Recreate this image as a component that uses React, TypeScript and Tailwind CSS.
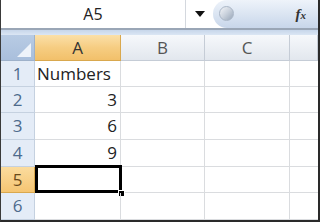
import React from "react";

const cols = ["A", "B", "C", ""];
const rows = [
  { n: 1, a: "Numbers", left: true },
  { n: 2, a: "3" },
  { n: 3, a: "6" },
  { n: 4, a: "9" },
  { n: 5, a: "" },
  { n: 6, a: "" },
];

export default function App() {
  return (
    <div
      className="w-[320px] h-[222px] overflow-hidden bg-white border-l border-r-2 border-b-2 border-l-[#3a3a3a] border-r-[#2a2a2a] border-b-[#2a2a2a] flex flex-col"
      style={{ fontFamily: '"Open Sans", "Liberation Sans", sans-serif' }}
    >
      {/* name box + formula bar */}
      <div className="h-[28px] flex items-stretch bg-white">
        <div className="w-[185px] flex items-center justify-center text-[16px] text-[#222] border-r border-[#d4d8de]">
          A5
        </div>
        <div className="w-[27px] flex items-center justify-center">
          <svg width="10" height="7" viewBox="0 0 10 7">
            <path d="M0 0 L10 0 L5 6 Z" fill="#111" />
          </svg>
        </div>
        <div className="flex-1 flex items-center justify-end pr-3 rounded-l-[14px] bg-gradient-to-b from-[#eef3fa] via-[#dbe5f2] to-[#c8d6ea] relative">
          <div className="absolute left-[6px] top-[6px] w-[15px] h-[15px] rounded-full bg-gradient-to-br from-[#f4f6f9] via-[#c9d1dc] to-[#98a6b8] border border-[#aab6c6]" />
          <span
            className="text-[15px] italic font-bold text-[#333]"
            style={{ fontFamily: '"Liberation Serif", serif' }}
          >
            f<span className="text-[11px]">x</span>
          </span>
        </div>
      </div>
      <div className="h-[2px] bg-[#9aa6b6]" />
      <div className="h-[5px] bg-gradient-to-b from-[#c7d6ea] to-[#dbe6f4]" />

      {/* sheet grid */}
      <div className="grid grid-cols-[34px_86px_84px_85px_1fr] grid-rows-[26px_26px_26px_27px_27px_26px_27px]">
        {/* corner */}
        <div className="relative bg-gradient-to-b from-[#b8cbe4] to-[#a9bfdc] border-r border-b border-[#9eb1ca]">
          <svg className="absolute right-[3px] bottom-[3px]" width="14" height="14" viewBox="0 0 14 14">
            <path d="M14 0 L14 14 L0 14 Z" fill="#eef3fa" />
          </svg>
        </div>
        {cols.map((c, i) => (
          <div
            key={i}
            className={
              c === "A"
                ? "flex items-center justify-center text-[17px] text-[#333] bg-gradient-to-b from-[#fbe0a8] via-[#f6cd82] to-[#f2c06a] border-r border-b border-[#d9a84e]"
                : "flex items-center justify-center text-[17px] text-[#555] bg-gradient-to-b from-[#f6f8fb] to-[#e2e7ee] border-r border-b border-[#c5ccd6]"
            }
          >
            {c}
          </div>
        ))}

        {rows.map((r) => (
          <React.Fragment key={r.n}>
            <div
              className={
                r.n === 5
                  ? "flex items-center justify-center text-[17px] text-[#6a4a1a] bg-gradient-to-b from-[#fbdc9e] to-[#f5c572] border-r border-b border-[#d9a84e]"
                  : "flex items-center justify-center text-[17px] text-[#4d6a8c] bg-[#e4ecf7] border-r border-b border-[#c5d1e0]"
              }
            >
              {r.n}
            </div>
            <div
              className={
                "relative flex items-center text-[17px] text-[#222] border-r border-b border-[#dadcdf] " +
                (r.left ? "justify-start pl-[2px]" : "justify-end pr-[3px]")
              }
            >
              {r.a}
              {r.n === 5 && (
                <>
                  <div className="absolute left-0 top-[-2px] right-[-2px] bottom-[-1px] border-[3px] border-black" />
                  <div className="absolute right-[-5px] bottom-[-5px] w-[7px] h-[7px] bg-black border border-white" />
                </>
              )}
            </div>
            <div className="border-r border-b border-[#dadcdf]" />
            <div className="border-r border-b border-[#dadcdf]" />
            <div className="border-b border-[#dadcdf]" />
          </React.Fragment>
        ))}
      </div>
    </div>
  );
}
